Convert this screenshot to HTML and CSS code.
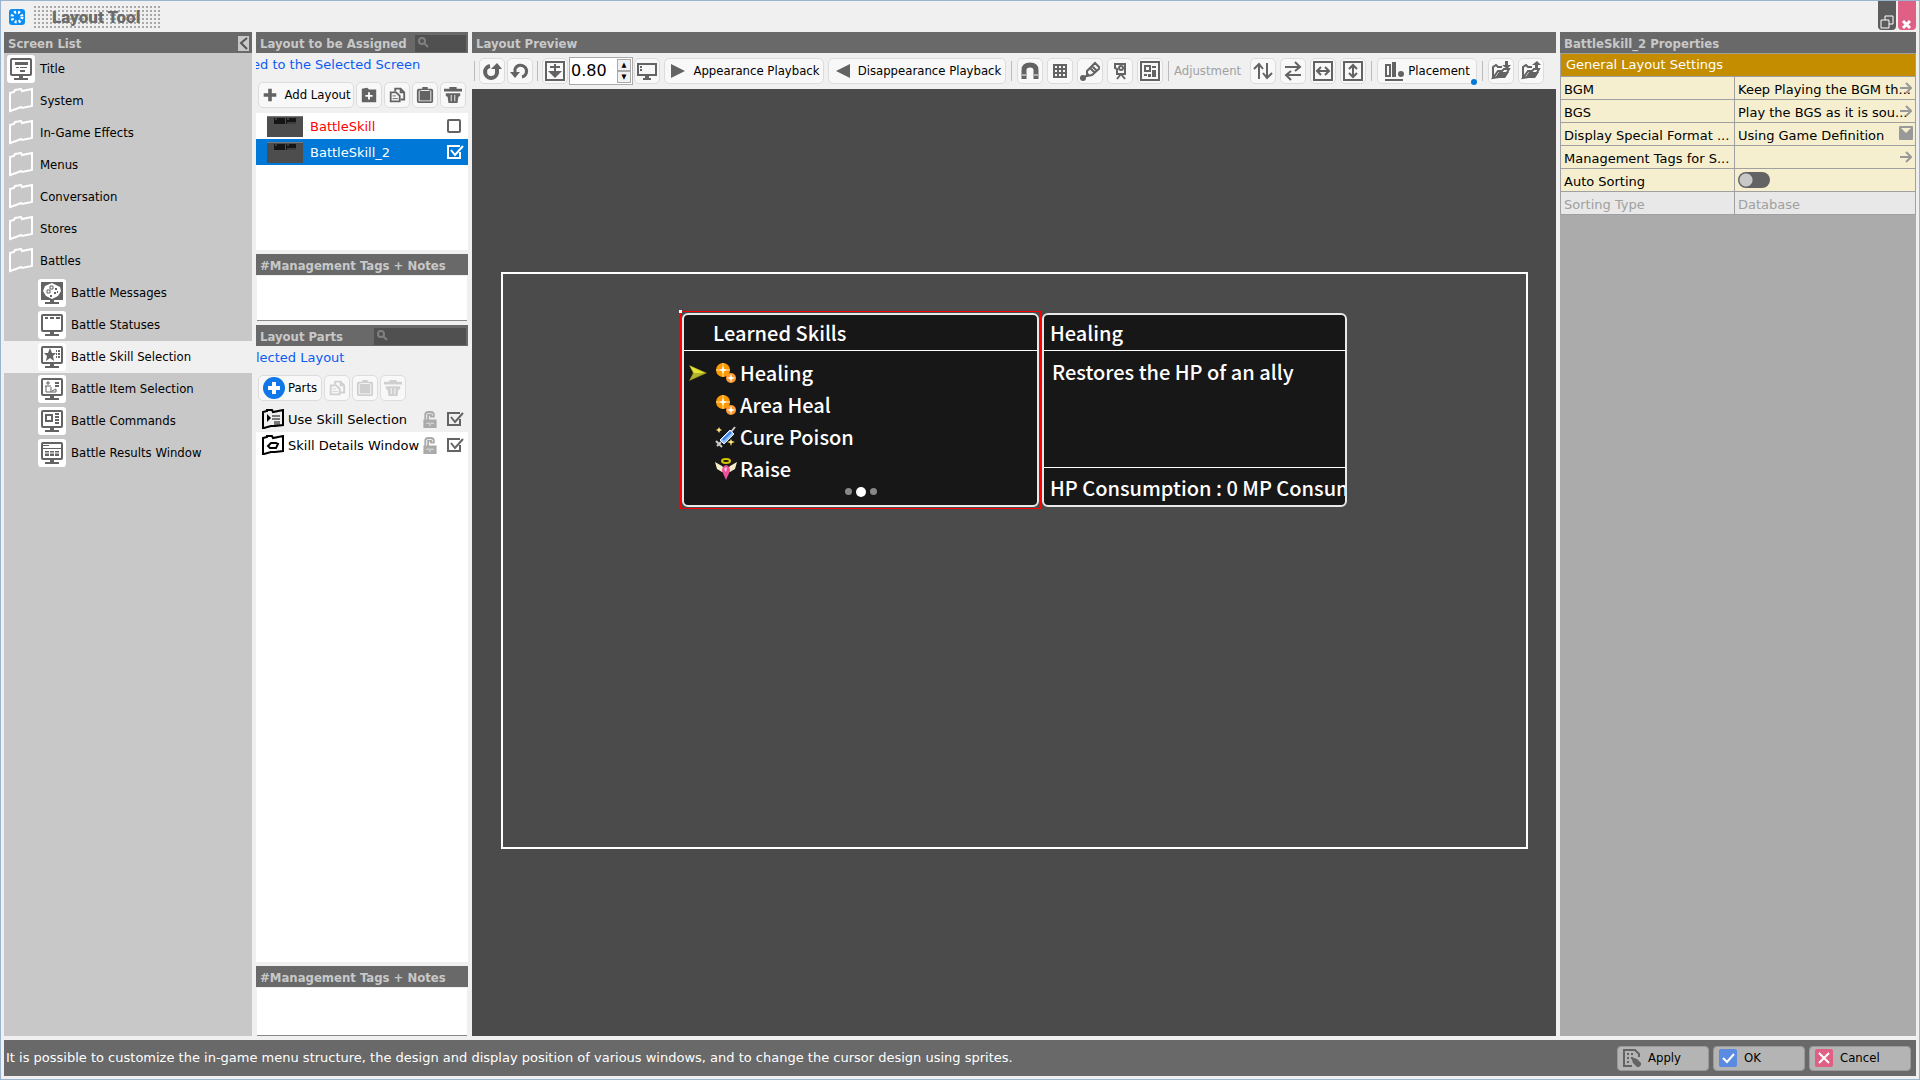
FILE: index.html
```html
<!DOCTYPE html>
<html lang="en">
<head>
<meta charset="utf-8">
<title>Layout Tool</title>
<link rel="stylesheet" href="styles.css">
</head>
<body>
<svg class="defs" aria-hidden="true">
  <symbol id="folder" viewBox="0 0 28 28"><path d="M3 6l4-1 1-2 6-1 1 2 10-2v17l-10 2-1-1-5 2-6 2z" fill="none" stroke="#fff" stroke-width="2"/></symbol>
  <symbol id="monitor" viewBox="0 0 28 28"><rect x="4" y="4" width="20" height="16" rx="1" fill="none" stroke="#636363" stroke-width="2"/><path d="M12 20h4v3h5v2H7v-2h5z" fill="#636363"/></symbol>
  <symbol id="copy" viewBox="0 0 20 20"><path d="M8 6V3h6l4 4v8h-4M14 3v4h4" fill="none" stroke="currentColor" stroke-width="2"/><path d="M3 7h6l4 4v6H3z" fill="none" stroke="currentColor" stroke-width="2"/><path d="M5 11h4M5 14h6" stroke="currentColor" stroke-width="1"/></symbol>
  <symbol id="paste" viewBox="0 0 20 20"><rect x="2" y="4" width="16" height="14" rx="1" fill="none" stroke="currentColor" stroke-width="2"/><path d="M7 1h6v3h3v12H4V4h3z" fill="currentColor"/><path d="M5 5h10" stroke="#f8f8f8"/></symbol>
  <symbol id="trash" viewBox="0 0 20 20"><path d="M6 1h8v2h6v3H0V3h6zM2 8h16v3l-2 1-1 7H5l-1-7-2-1z" fill="currentColor"/><path d="M8 10v7M12 10v7" stroke="#f8f8f8"/></symbol>
  <symbol id="lock" viewBox="0 0 14 18"><path d="M2 10V4q0-3 3-3h3q3 0 3 3v2H8V4H5v6" fill="none" stroke="#aaa" stroke-width="2"/><path d="M0 9h14v9H0z" fill="#aaa"/><path d="M3 13h3M8 13h3M7 12v4" stroke="#e4e4e4"/></symbol>
  <symbol id="thumb" viewBox="0 0 36 21"><rect width="36" height="21" fill="#4d4d4d"/><path d="M0 0h36v1H0z" fill="#777"/><path d="M7 2h11v6H7zM19 2h10v6H19z" fill="#151515"/><path d="M8 3h2M20 3h2M20 7h9" stroke="#666" stroke-width="1"/></symbol>
  <symbol id="arrow" viewBox="0 0 12 12"><path d="M0 6h11M6 1l5 5-5 5" fill="none" stroke="#999" stroke-width="2"/></symbol>
  <symbol id="orbs" viewBox="0 0 22 22"><circle cx="8" cy="8" r="7" fill="#f90"/><circle cx="16" cy="16" r="5" fill="#f93"/><path d="M8 1v14M1 8h14M16 12v8M12 16h8" stroke="#ffe3a0" stroke-width="1"/><path d="M8 4l1 3 3 1-3 1-1 3-1-3-3-1 3-1zM16 13l1 2 2 1-2 1-1 2-1-2-2-1 2-1z" fill="#fff"/></symbol>
</svg>

<header class="titlebar">
  <svg class="app-icon" viewBox="0 0 16 16"><rect width="16" height="16" rx="3" fill="#0a8cf5"/><circle cx="8" cy="8" r="5" fill="none" stroke="#fff" stroke-width="3" stroke-dasharray="2 2"/></svg>
  <h1 class="app-name">Layout Tool</h1>
  <div class="win-controls">
    <button class="win-btn" aria-label="Restore"><svg viewBox="0 0 12 12"><path d="M0 4h8v8H0zM4 4V0h8v8H8" fill="none" stroke="#fff"/></svg></button>
    <button class="win-btn close" aria-label="Close"><svg viewBox="0 0 12 12"><path d="M2 5l7 7M9 5l-7 7" fill="none" stroke="#fff" stroke-width="3"/></svg></button>
  </div>
</header>

<main class="workspace">
  <section class="panel screens">
    <h2 class="panel-head">Screen List<button class="collapse" aria-label="Collapse"><svg viewBox="0 0 11 15"><path d="M9 2L3 7l6 6" fill="none" stroke="#555" stroke-width="2"/></svg></button></h2>
    <nav class="tree">
      <a href="#" class="node"><svg class="tile"><use href="#monitor"/><path d="M8 7h13v3H8zM9 12h3v1H9zM13 12h7v1h-7zM13 15h5v2h-5z" fill="#636363"/></svg>Title</a>
      <a href="#" class="node"><svg><use href="#folder"/></svg>System</a>
      <a href="#" class="node"><svg><use href="#folder"/></svg>In-Game Effects</a>
      <a href="#" class="node"><svg><use href="#folder"/></svg>Menus</a>
      <a href="#" class="node"><svg><use href="#folder"/></svg>Conversation</a>
      <a href="#" class="node"><svg><use href="#folder"/></svg>Stores</a>
      <a href="#" class="node"><svg><use href="#folder"/></svg>Battles</a>
      <a href="#" class="node child"><svg class="tile"><use href="#monitor"/><path d="M3 3h22v18H3z" fill="#636363"/><path d="M14 4l8 4 1 4-3 5-6 3-6-3-3-5 2-5z" fill="#fff"/><path d="M12 7h3v3h-3zM9 11h3v3H9z" fill="none" stroke="#636363"/><path d="M17 9h2v2h-2zM16 13h2v2h-2zM12 16h2v2h-2zM19 12h1v2h-1z" fill="#636363"/></svg>Battle Messages</a>
      <a href="#" class="node child"><svg class="tile"><use href="#monitor"/><path d="M7 7h3M12 7h4M18 7h4" stroke="#636363" stroke-width="2"/></svg>Battle Statuses</a>
      <a href="#" class="node child selected"><svg class="tile"><use href="#monitor"/><path d="M12 5l2 5h4l-3 3 1 5-4-3-4 3 1-5-3-3h4z" fill="#636363"/><path d="M18 8h4M18 11h4M18 14h4" stroke="#636363" stroke-width="2" stroke-dasharray="1 1 2"/></svg>Battle Skill Selection</a>
      <a href="#" class="node child"><svg class="tile"><use href="#monitor"/><path d="M10 6v4M8 8h4M7 11h6M8 11v6h5v-5M14 16l4-2v3h-5" fill="none" stroke="#636363" stroke-width="1"/><path d="M17 8h4M17 11h4" stroke="#636363" stroke-width="2"/></svg>Battle Item Selection</a>
      <a href="#" class="node child"><svg class="tile"><use href="#monitor"/><path d="M8 8h6v6H8z" fill="none" stroke="#636363" stroke-width="2"/><path d="M17 7h4M17 10h4M17 13h4M17 16h4" stroke="#636363" stroke-width="2"/></svg>Battle Commands</a>
      <a href="#" class="node child"><svg class="tile"><use href="#monitor"/><path d="M5 6h6v1H5zM4 9h20v1H4zM7 12h4v5H7zM12 12h4v5h-4zM17 12h4v5h-4z" fill="#636363"/><path d="M6 14h16" stroke="#fff"/></svg>Battle Results Window</a>
    </nav>
  </section>

  <div class="side">
    <section class="panel layouts">
      <h2 class="panel-head">Layout to be Assigned<input class="search small" type="text" aria-label="Search layouts"></h2>
      <p class="ticker scrolled">ed to the Selected Screen</p>
      <div class="tools">
        <button class="btn wide"><svg viewBox="0 0 20 20"><path d="M8 3h4v5h5v4h-5v5H8v-5H3V8h5z" fill="currentColor"/></svg>Add Layout</button>
        <button class="btn" aria-label="Add folder"><svg viewBox="0 0 20 20"><path d="M2 3l6-1 2 2h8v14H2z" fill="currentColor"/><path d="M10 7v8M6 11h8" stroke="#fff" stroke-width="2"/></svg></button>
        <button class="btn" aria-label="Copy"><svg><use href="#copy"/></svg></button>
        <button class="btn" aria-label="Paste"><svg><use href="#paste"/></svg></button>
        <button class="btn" aria-label="Delete"><svg><use href="#trash"/></svg></button>
      </div>
      <ul class="list">
        <li><label class="row missing"><svg class="thumb"><use href="#thumb"/></svg><span>BattleSkill</span><input type="checkbox"></label></li>
        <li><label class="row active"><svg class="thumb"><use href="#thumb"/></svg><span>BattleSkill_2</span><input type="checkbox" checked></label></li>
      </ul>
    </section>
    <section class="notes">
      <h2 class="panel-head"><label for="notes1">#Management Tags + Notes</label></h2>
      <textarea id="notes1"></textarea>
    </section>
    <section class="panel parts">
      <h2 class="panel-head">Layout Parts<input class="search" type="text" aria-label="Search parts"></h2>
      <p class="ticker">lected Layout</p>
      <div class="tools">
        <button class="btn add"><svg viewBox="0 0 22 22"><circle cx="11" cy="11" r="11" fill="#0f78e6"/><path d="M11 5v12M5 11h12" stroke="#fff" stroke-width="4"/></svg>Parts</button>
        <button class="btn" disabled aria-label="Copy"><svg><use href="#copy"/></svg></button>
        <button class="btn" disabled aria-label="Paste"><svg><use href="#paste"/></svg></button>
        <button class="btn" disabled aria-label="Delete"><svg><use href="#trash"/></svg></button>
      </div>
      <ul class="list">
        <li><label class="row part current"><svg class="part-icon" viewBox="0 0 22 20"><path d="M1 3l4-1V1h5l1 2 10-2v15l-8 1h-4l-7 2H1z" fill="none" stroke="#000" stroke-width="2"/><path d="M5 5l4 4-4 4z"/><path d="M10 7h8M10 10h8M12 13h6M12 15h6" stroke="#000"/></svg><span>Use Skill Selection</span><svg class="lock"><use href="#lock"/></svg><input type="checkbox" checked></label></li>
        <li><label class="row part"><svg class="part-icon" viewBox="0 0 22 20"><path d="M1 3l4-1V1h5l1 2 10-2v15l-8 1h-4l-7 2H1z" fill="none" stroke="#000" stroke-width="2"/><path d="M9 8h5l2 1-2 4H8l-2-2z" fill="none" stroke="#000" stroke-width="2"/></svg><span>Skill Details Window</span><svg class="lock"><use href="#lock"/></svg><input type="checkbox" checked></label></li>
      </ul>
    </section>
    <section class="notes tall">
      <h2 class="panel-head"><label for="notes2">#Management Tags + Notes</label></h2>
      <textarea id="notes2"></textarea>
    </section>
  </div>

  <section class="panel preview">
    <h2 class="panel-head">Layout Preview</h2>
    <div class="toolbar">
      <i class="sep"></i>
      <div class="pair">
        <button class="btn" aria-label="Undo"><svg viewBox="0 0 20 20"><path d="M8 5a6 6 0 1 0 7 7V6" fill="none" stroke="currentColor" stroke-width="4"/><path d="M9 8l6-6 5 6z" fill="currentColor"/></svg></button>
        <button class="btn" aria-label="Redo"><svg viewBox="0 0 20 20"><path d="M12 16a6 6 0 1 0-7-8v5" fill="none" stroke="currentColor" stroke-width="3"/><path d="M0 11h10l-5 6z" fill="currentColor"/></svg></button>
      </div>
      <i class="sep"></i>
      <div class="pair tight">
        <button class="btn" aria-label="Fit zoom"><svg viewBox="0 0 20 20"><path d="M1 1h18v18H1z" fill="none" stroke="currentColor" stroke-width="2"/><path d="M9 3h2v2h4v2h-4v3h6l-3 3-4 4-4-4-3-3h6V7H5V5h4z" fill="currentColor"/></svg></button>
        <div class="spin"><input type="text" value="0.80" aria-label="Zoom"><button aria-label="Increase">▲</button><button aria-label="Decrease">▼</button></div>
        <button class="btn" aria-label="Screen"><svg viewBox="0 0 20 20"><path d="M1 3h18v11H1z" fill="none" stroke="currentColor" stroke-width="2"/><path d="M8 14h4v3h2v2H6v-2h2zM3 5h2v2H3zM3 8h2v2H3z" fill="currentColor"/></svg></button>
      </div>
      <button class="btn appear"><svg viewBox="0 0 20 20"><path d="M3 3l14 7-14 7z" fill="currentColor"/></svg>Appearance Playback</button>
      <button class="btn disappear"><svg viewBox="0 0 20 20"><path d="M17 3L3 10l14 7z" fill="currentColor"/></svg>Disappearance Playback</button>
      <i class="sep loose"></i>
      <button class="btn" aria-label="Snap"><svg viewBox="0 0 20 20"><path d="M4 18V9q0-5 6-5t6 5v9" fill="none" stroke="currentColor" stroke-width="5"/><path d="M2 14h4M14 14h4" stroke="#fff"/></svg></button>
      <button class="btn" aria-label="Grid"><svg viewBox="0 0 20 20"><path d="M4 4h12v12H4zM8 4v12M12 4v12M4 8h12M4 12h12" fill="none" stroke="currentColor" stroke-width="2"/></svg></button>
      <button class="btn" aria-label="Eyedropper"><svg viewBox="0 0 20 20"><circle cx="3" cy="17" r="3" fill="currentColor"/><path d="M3 17l6-4M7 10l8-8 5 5-8 7-5 1zM10 7l5 5M12 5l5 5" fill="none" stroke="currentColor" stroke-width="2"/></svg></button>
      <button class="btn" aria-label="Camera"><svg viewBox="0 0 20 20"><path d="M7 3h8v10H7V8L5 7V3z" fill="none" stroke="currentColor" stroke-width="2"/><circle cx="11" cy="7" r="2" fill="none" stroke="currentColor" stroke-width="2"/><path d="M11 13l-4 5M11 13l4 5" stroke="currentColor" stroke-width="2"/></svg></button>
      <button class="btn" aria-label="Frame"><svg viewBox="0 0 20 20"><path d="M1 1h18v18H1z" fill="none" stroke="currentColor" stroke-width="2"/><path d="M5 5h5v5H5z" fill="none" stroke="currentColor" stroke-width="2"/><path d="M12 5h4v2h-4zM12 9h4v7h-4zM4 13h3v2H4zM8 13h3v3H8z" fill="currentColor"/></svg></button>
      <i class="sep loose"></i>
      <span class="group-label">Adjustment</span>
      <button class="btn" aria-label="Swap vertically"><svg viewBox="0 0 20 20"><path d="M6 18V3M1 8l5-5 4 5M14 2v15M10 12l4 5 5-5" fill="none" stroke="currentColor" stroke-width="2"/></svg></button>
      <button class="btn" aria-label="Swap horizontally"><svg viewBox="0 0 20 20"><path d="M2 6h15M12 1l5 5-5 4M18 14H3M8 10l-5 4 5 5" fill="none" stroke="currentColor" stroke-width="2"/></svg></button>
      <button class="btn" aria-label="Match width"><svg viewBox="0 0 20 20"><path d="M1 1h18v18H1zM4 10h12M8 6l-4 4 4 4M12 6l4 4-4 4" fill="none" stroke="currentColor" stroke-width="2"/></svg></button>
      <button class="btn" aria-label="Match height"><svg viewBox="0 0 20 20"><path d="M1 1h18v18H1zM10 4v12M6 8l4-4 4 4M6 12l4 4 4-4" fill="none" stroke="currentColor" stroke-width="2"/></svg></button>
      <i class="sep loose"></i>
      <button class="btn placement"><svg viewBox="0 0 20 20"><path d="M2 4h4v11H2z" fill="none" stroke="currentColor" stroke-width="2"/><path d="M8 1h4v15H8zM1 18h18v2H1z" fill="currentColor"/><circle cx="17" cy="13" r="3" fill="currentColor"/></svg>Placement</button>
      <i class="sep loose"></i>
      <button class="btn" aria-label="Import"><svg viewBox="0 0 20 20"><path d="M2 17V6l3-2 2 2h4M2 17l5-7h4l2-2h5l-4 7z" fill="none" stroke="currentColor" stroke-width="2"/><path d="M4 17l4-6h10l-4 6zM14 0h3v4h3l-4 4-5-4h3z" fill="currentColor"/></svg></button>
      <button class="btn" aria-label="Export"><svg viewBox="0 0 20 20"><path d="M2 17V6l3-2 2 2h4M2 17l5-7h4l2-2h5l-4 7z" fill="none" stroke="currentColor" stroke-width="2"/><path d="M4 17l4-6h10l-4 6zM14 8h3V4h3l-4-4-5 4h3z" fill="currentColor"/></svg></button>
    </div>
    <div class="canvas">
      <div class="screen">
        <div class="selection"><i class="handle"></i></div>
        <div class="gwin skills">
          <h3>Learned Skills</h3>
          <ul>
            <li><svg class="cursor" viewBox="0 0 18 18"><path d="M0 1l18 8-18 8 4-8z" fill="#9c9c20"/><path d="M1 2l15 7H5z" fill="#e4e438"/><path d="M5 9h11L2 15z" fill="#b4b42c"/></svg><svg class="gicon"><use href="#orbs"/></svg>Healing</li>
            <li><svg class="gicon"><use href="#orbs"/></svg>Area Heal</li>
            <li><svg class="gicon" viewBox="0 0 22 22"><path d="M2 20l4-4M1 15l6 6M16 6l4-5" stroke="#ccc" stroke-width="2"/><path d="M5 14L15 4l4 4L9 18z" fill="#8bc4ff" stroke="#eef" stroke-width="1"/><path d="M8 14l8-8" stroke="#3b7fe0" stroke-width="2"/><path d="M4 1l1 2 2 1-2 1-1 2-1-2-2-1 2-1zM16 13l1 2 3 1-3 1-1 3-1-3-3-1 3-1z" fill="#ffe27a"/></svg>Cure Poison</li>
            <li><svg class="gicon" viewBox="0 0 22 22"><path d="M0 4l7 4 4 5 4-5 7-4-2 7-5 3H7l-5-3z" fill="#f5ecc8"/><ellipse cx="11" cy="3" rx="4" ry="2" fill="none" stroke="#d9c800" stroke-width="2"/><path d="M11 7q4 1 4 6l-4 9-4-9q0-5 4-6z" fill="#f04f9a"/><path d="M9 11q2-3 3-1l-1 4z" fill="#ffc0dc"/></svg>Raise</li>
          </ul>
          <div class="dots"><i></i><i class="on"></i><i></i></div>
        </div>
        <div class="gwin details">
          <h3>Healing</h3>
          <p>Restores the HP of an ally</p>
          <footer>HP Consumption : 0 MP Consumption</footer>
        </div>
      </div>
    </div>
  </section>

  <section class="panel props">
    <h2 class="panel-head">BattleSkill_2 Properties</h2>
    <table>
      <colgroup><col class="name-col"><col></colgroup>
      <thead><tr><th colspan="2">General Layout Settings</th></tr></thead>
      <tbody>
        <tr><td>BGM</td><td>Keep Playing the BGM th...<svg class="go"><use href="#arrow"/></svg></td></tr>
        <tr><td>BGS</td><td>Play the BGS as it is sou...<svg class="go"><use href="#arrow"/></svg></td></tr>
        <tr><td>Display Special Format ...</td><td>Using Game Definition<svg class="drop" viewBox="0 0 14 14"><rect width="14" height="14" rx="1" fill="#999"/><path d="M2 2h10L7 7z" fill="#f5efd0"/></svg></td></tr>
        <tr><td>Management Tags for S...</td><td><svg class="go"><use href="#arrow"/></svg></td></tr>
        <tr><td><label for="autosort">Auto Sorting</label></td><td><input class="toggle" id="autosort" type="checkbox"></td></tr>
        <tr class="off"><td>Sorting Type</td><td>Database</td></tr>
      </tbody>
    </table>
  </section>
</main>

<footer class="status">
  <p>It is possible to customize the in-game menu structure, the design and display position of various windows, and to change the cursor design using sprites.</p>
  <button class="action"><svg viewBox="0 0 18 18"><path d="M16 8V5l-4-4H1v16h8" fill="none" stroke="#636363" stroke-width="2"/><path d="M4 5h2M8 5h2M4 9h2M8 9h2M4 13h2" stroke="#636363" stroke-width="2"/><path d="M8 8l6 2 5 5-4 4-5-5z" fill="#636363"/></svg>Apply</button>
  <button class="action"><svg viewBox="0 0 18 18"><rect width="18" height="18" rx="2" fill="#5b8be0"/><path d="M4 9l4 4 7-8" fill="none" stroke="#fff" stroke-width="2"/></svg>OK</button>
  <button class="action last"><svg viewBox="0 0 18 18"><rect width="18" height="18" rx="2" fill="#e05f85"/><path d="M4 4l10 10M14 4L4 14" stroke="#fff" stroke-width="2"/></svg>Cancel</button>
</footer>
</body>
</html>
```
FILE: styles.css
```css
* { box-sizing: border-box; }
body, h1, h2, h3, p, ul { margin: 0; padding: 0; }
ul { list-style: none; }
body {
  height: 100vh;
  display: flex;
  flex-direction: column;
  gap: 4px;
  padding: 0 3px 3px;
  border: 1px solid #99b4d1;
  background: #f0f0f0;
  color: #000;
  font: 13px/16px "DejaVu Sans Condensed", "DejaVu Sans", sans-serif;
  overflow: hidden;
}
button, input, textarea { font: inherit; color: inherit; margin: 0; padding: 0; border: 0; }
svg { display: block; flex: none; }
.defs { position: absolute; width: 0; height: 0; }

.titlebar { display: flex; height: 27px; align-items: flex-start; }
.app-icon { width: 16px; height: 16px; margin: 8px 9px 0 5px; }
.app-name {
  width: 127px;
  height: 23px;
  margin-top: 5px;
  padding-left: 18px;
  background: conic-gradient(transparent 75%, #a8a8a8 0) 0 0 / 4px 4px;
  color: #6b6b6b;
  font: 900 17px/23px Roboto, sans-serif;
  white-space: nowrap;
}
.win-controls { display: flex; gap: 2px; margin-left: auto; }
.win-btn { width: 18px; height: 29px; padding: 13px 3px 0; border-radius: 0 0 4px 4px; background: #5c5c5c; }
.win-btn.close { background: #e05f85; }
.win-btn svg { width: 12px; height: 12px; overflow: visible; }

.workspace { flex: 1; min-height: 0; display: grid; grid-template-columns: 248px 212px minmax(0, 1fr) 356px; gap: 4px; }
.panel { display: flex; flex-direction: column; min-width: 0; min-height: 0; }
.panel-head {
  flex: none;
  display: flex;
  align-items: center;
  height: 21px;
  padding: 2px 0 0 4px;
  background: #696969;
  color: #c8c8c8;
  font-size: 13px;
  font-weight: bold;
  white-space: nowrap;
}
.collapse { width: 11px; height: 15px; margin: 0 3px 0 auto; background: #c8c8c8; }
.collapse svg { width: 11px; height: 15px; }
.search {
  width: 92px;
  height: 17px;
  margin: 0 2px 0 auto;
  padding-left: 16px;
  background: #505050 url("data:image/svg+xml,%3Csvg xmlns='http://www.w3.org/2000/svg' width='12' height='12'%3E%3Ccircle cx='5' cy='5' r='3' fill='none' stroke='%23808080' stroke-width='2'/%3E%3Cpath d='M7 7l4 4' stroke='%23808080' stroke-width='2'/%3E%3C/svg%3E") 2px 1px no-repeat;
}
.search.small { width: 51px; }

.screens { background: #c8c8c8; }
.node { display: flex; align-items: center; gap: 5px; height: 32px; padding-left: 3px; color: #000; text-decoration: none; }
.node svg { width: 28px; height: 28px; }
.node .tile { border-radius: 3px; background: #fff; }
.child { padding-left: 34px; }
.selected { background: #f0f0f0; }

.side { display: flex; flex-direction: column; gap: 4px; min-width: 0; min-height: 0; }
.layouts { height: 218px; }
.parts { flex: 1; }
.ticker { flex: none; height: 27px; padding-top: 4px; overflow: hidden; color: #0a5cf0; font: 13px/16px "DejaVu Sans", sans-serif; white-space: nowrap; }
.scrolled { text-indent: -4px; }
.tools { flex: none; display: flex; gap: 2px; height: 33px; padding: 2px 0 0 2px; }
.btn {
  display: flex;
  align-items: center;
  justify-content: center;
  width: 26px;
  height: 26px;
  flex: none;
  border: 1px solid #dcdcdc;
  border-radius: 5px;
  background: #f8f8f8;
  color: #000;
  white-space: nowrap;
}
.btn svg { width: 18px; height: 18px; color: #636363; }
.btn:disabled svg { color: #cfcfcf; }
.wide { width: 96px; gap: 5px; }
.add { width: 64px; gap: 3px; }
.add svg { width: 22px; height: 22px; }
.list { flex: 1; background: #fff; }
.row { display: flex; align-items: center; height: 26px; padding: 0 4px 0 11px; font: 13px/16px "DejaVu Sans", sans-serif; white-space: nowrap; }
.row span { flex: 1; padding-top: 2px; }
.row input {
  appearance: none;
  width: 17px;
  height: 16px;
  background: url("data:image/svg+xml,%3Csvg xmlns='http://www.w3.org/2000/svg' width='17' height='16'%3E%3Crect x='1' y='2' width='12' height='12' rx='1' fill='none' stroke='%23636363' stroke-width='2'/%3E%3C/svg%3E");
}
.row input:checked { background-image: url("data:image/svg+xml,%3Csvg xmlns='http://www.w3.org/2000/svg' width='17' height='16'%3E%3Cpath d='M13 8v6H1V2h12M4 6l4 5 8-9' fill='none' stroke='%23636363' stroke-width='2'/%3E%3C/svg%3E"); }
.row.active input { background-image: url("data:image/svg+xml,%3Csvg xmlns='http://www.w3.org/2000/svg' width='17' height='16'%3E%3Cpath d='M13 8v6H1V2h12M4 6l4 5 8-9' fill='none' stroke='%23fff' stroke-width='2'/%3E%3C/svg%3E"); }
.thumb { width: 36px; height: 21px; margin-right: 7px; }
.missing { color: #f00; }
.active { background: #0078d7; color: #fff; }
.part { padding-left: 6px; }
.current { background: #f0f0f0; }
.part-icon { width: 22px; height: 20px; margin-right: 4px; }
.lock { width: 14px; height: 17px; margin-right: 10px; }
.notes { display: flex; flex-direction: column; height: 67px; }
.tall { height: 70px; }
.notes textarea { flex: 1; min-height: 0; margin: 1px 1px 0; border-bottom: 1px solid #888; background: #fff; resize: none; }

.toolbar { flex: none; display: flex; align-items: center; gap: 4px; height: 36px; padding-left: 2px; }
.sep { width: 1px; height: 20px; background: #bbb; flex: none; }
.loose { margin: 0 1px; }
.pair { display: flex; align-items: center; gap: 2px; }
.tight { gap: 1px; }
.toolbar .btn svg { width: 20px; height: 20px; }
.spin { display: grid; grid-template-columns: 1fr 14px; grid-template-rows: 1fr 1fr; width: 64px; height: 28px; padding: 1px; border: 1px solid #aaa; background: #fff; }
.spin input { grid-row: 1 / 3; min-width: 0; background: none; font: 16px/20px "DejaVu Sans", sans-serif; }
.spin button { border: 1px solid #aaa; background: #f0f0f0; font-size: 7px; line-height: 8px; }
.toolbar .appear { width: 160px; gap: 5px; }
.toolbar .disappear { width: 178px; gap: 5px; }
.toolbar .placement { position: relative; width: 100px; gap: 4px; }
.placement::after { content: ""; position: absolute; right: -1px; bottom: -2px; width: 6px; height: 6px; border-radius: 3px; background: #0078d7; }
.group-label { width: 72px; color: #a0a0a0; white-space: nowrap; }

.canvas { flex: 1; display: flex; align-items: center; padding: 0 28px 4px 29px; background: #4b4b4b; }
.screen { position: relative; flex: 1; aspect-ratio: 16 / 9; border: 2px solid #fff; color: #fff; font: 500 20px/32px "Noto Sans CJK JP", "Noto Sans", sans-serif; }
.selection { position: absolute; left: 177px; top: 37px; width: 361px; height: 198px; border: 1px solid #f00; }
.handle { position: absolute; left: -2px; top: -2px; width: 3px; height: 3px; background: #fff; }
.gwin { position: absolute; top: 39px; height: 194px; border: 2px solid #e8e8e8; border-radius: 6px; background: #171717; overflow: hidden; white-space: nowrap; }
.gwin h3 { height: 36px; border-bottom: 1px solid #fff; font: inherit; line-height: 36px; }
.skills { left: 179px; width: 357px; }
.skills h3 { padding-left: 29px; }
.skills ul { padding-top: 6px; }
.skills li { display: flex; align-items: center; gap: 3px; height: 32px; padding-left: 31px; }
.gicon { width: 22px; height: 22px; }
.cursor { width: 18px; height: 18px; margin: 0 5px 0 -26px; }
.dots { display: flex; align-items: center; justify-content: center; gap: 4px; height: 14px; }
.dots i { width: 7px; height: 7px; border-radius: 50%; background: #888; }
.dots .on { width: 10px; height: 10px; background: #fff; }
.details { left: 539px; width: 305px; display: flex; flex-direction: column; }
.details h3, .details footer { padding-left: 6px; }
.details p { flex: 1; padding: 5px 0 0 8px; }
.details footer { height: 38px; border-top: 1px solid #fff; line-height: 40px; }

.props { background: #ababab; }
.props table { width: 100%; border-collapse: collapse; table-layout: fixed; font: 13px/16px "DejaVu Sans", sans-serif; }
.name-col { width: 174px; }
.props th, .props td { position: relative; height: 23px; padding: 4px 3px 0; border: 1px solid #a0a0a0; background: #f5efd0; text-align: left; font-weight: normal; white-space: nowrap; }
.props th { padding: 0 5px; background: #c48d00; color: #fff; }
.props .off td { background: #e8e8e8; color: #a0a0a0; }
.props .go, .props .drop { position: absolute; right: 3px; top: 5px; width: 12px; height: 12px; }
.props .drop { right: 2px; width: 14px; height: 14px; top: 3px; }
.props td:has(.toggle) { padding: 0 3px; }
.toggle { appearance: none; display: block; width: 32px; height: 16px; border-radius: 8px; background: radial-gradient(circle at 8px 8px, #c8c8c8 6px, #636363 7px); }

.status { flex: none; display: flex; align-items: center; gap: 4px; height: 36px; padding: 0 5px 0 2px; background: #696969; color: #fff; }
.status p { flex: 1; font: 13px/16px "DejaVu Sans", sans-serif; }
.action { display: flex; align-items: center; gap: 7px; width: 92px; height: 25px; padding-left: 5px; border: 1px solid #999; border-radius: 4px; background: #b4b4b4; color: #000; }
.action.last { width: 102px; }
.action svg { width: 18px; height: 18px; }
```
